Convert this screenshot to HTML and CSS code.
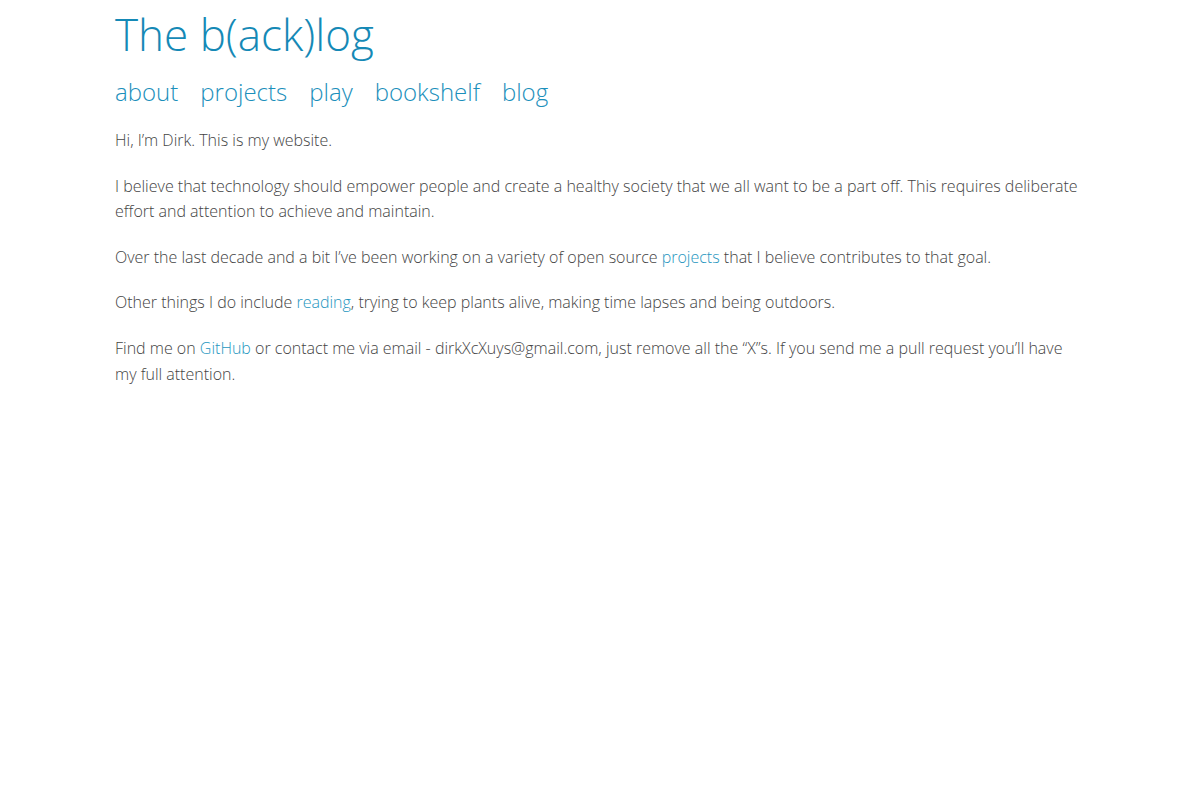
FILE: index.html
```html
<!DOCTYPE html>
<html lang="en">
<head>
<meta charset="utf-8">
<title>The b(ack)log</title>
<link rel="stylesheet" href="styles.css">
</head>
<body>
<div class="page">
  <header class="site-header">
    <h1 class="site-title"><a href="#">The b(ack)log</a></h1>
    <nav class="site-nav">
      <a href="#">about</a>
      <a href="#">projects</a>
      <a href="#">play</a>
      <a href="#">bookshelf</a>
      <a href="#">blog</a>
    </nav>
  </header>
  <main class="content">
    <p>Hi, I’m Dirk. This is my website.</p>
    <p>I believe that technology should empower people and create a healthy society that we all want to be a part off. This requires deliberate effort and attention to achieve and maintain.</p>
    <p>Over the last decade and a bit I’ve been working on a variety of open source <a href="#">projects</a> that I believe contributes to that goal.</p>
    <p>Other things I do include <a href="#">reading</a>, trying to keep plants alive, making time lapses and being outdoors.</p>
    <p>Find me on <a href="#">GitHub</a> or contact me via email - dirkXcXuys@gmail.com, just remove all the “X”s. If you send me a pull request you’ll have my full attention.</p>
  </main>
</div>
</body>
</html>
```
FILE: styles.css
```css
html, body {
  margin: 0;
  padding: 0;
  background: #fff;
}

body {
  font-family: "Open Sans", "Liberation Sans", sans-serif;
  font-weight: 300;
  font-size: 16px;
  line-height: 1.6;
  color: #444;
}

a {
  color: #2596c0;
  text-decoration: none;
}

.page {
  max-width: 970px;
  margin: 0 auto;
  padding: 0 15px;
}

.site-header {
  display: flex;
  flex-direction: column;
}

.site-title {
  margin: 0;
  padding-top: 4px;
  font-size: 44px;
  font-weight: 300;
  line-height: 60px;
}

.site-title a {
  color: #1589b6;
}

.site-nav {
  display: flex;
  gap: 22px;
  margin-top: 8px;
  font-size: 24px;
  line-height: 40px;
}

.site-nav a {
  color: #1b8fbb;
}

.content {
  margin-top: 16px;
}

.content p {
  margin: 0 0 20px;
}
```
